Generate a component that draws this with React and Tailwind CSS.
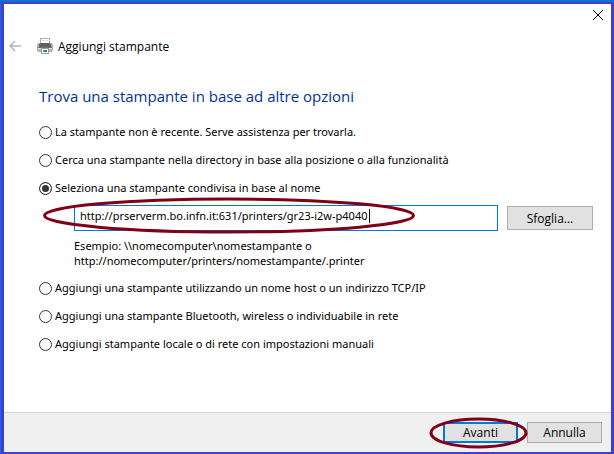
function PrinterIcon() {
  return (
    <svg width="16" height="16" viewBox="0 0 16 16" shapeRendering="crispEdges" aria-hidden="true">
      <path d="M3.5 0.5h9v5h-9z" fill="#fff" stroke="#b0b0b0" />
      <path d="M5 2h6v1H5z" fill="#e0e0e0" />
      <path d="M1 5h14v1h1v7h-1v1H1v-1H0V6h1z" fill="#b4b4b4" />
      <path d="M3 5h10v1h1v3H2V6h1z" fill="#606060" />
      <path d="M1 9h14v1H1z" fill="#707070" />
      <path d="M1 10h14v1H1z" fill="#e8e8e8" />
      <path d="M4.5 10.5h7v5h-7z" fill="#fff" stroke="#9a9a9a" />
      <path d="M6 12h2v2H6z" fill="#2aa198" />
      <path d="M8 12h2v2H8z" fill="#2f5fd0" />
    </svg>
  );
}

function Option({ id, label, defaultChecked }) {
  return (
    <div className="flex h-7 items-center gap-[3px]">
      <input
        type="radio"
        id={id}
        name="method"
        defaultChecked={defaultChecked}
        className="size-[13px] shrink-0 appearance-none rounded-full border border-[#333] bg-white checked:bg-[#333] checked:shadow-[inset_0_0_0_2px_#fff]"
      />
      <label htmlFor={id} className="pb-0.5">{label}</label>
    </div>
  );
}

export default function App() {
  return (
    <div className="flex min-h-screen flex-col border-t-2 border-l border-[#1470cc] font-['Open_Sans','Noto_Sans',sans-serif] text-[12px] leading-[15px] text-black">
      <div className="flex flex-1 flex-col border-t-2 border-r-[3px] border-b-2 border-l-[3px] border-[#423cd6] bg-white">
        <header>
          <div className="flex h-8 items-start justify-end pt-[5px] pr-[7px]">
            <button type="button" aria-label="Chiudi" className="p-px">
              <svg width="10" height="10" viewBox="0 0 10 10" stroke="#000" fill="none" aria-hidden="true">
                <path d="M0 0l10 10M10 0L0 10" />
              </svg>
            </button>
          </div>
          <div className="flex h-5 items-center pl-[5px]">
            <button type="button" aria-label="Indietro" disabled>
              <svg width="12" height="12" viewBox="0 0 12 12" stroke="#b4b4b4" fill="none" aria-hidden="true">
                <path d="M12 6H1M6 1L1 6l5 5" strokeWidth="1.5" />
              </svg>
            </button>
            <div className="ml-4 flex items-center gap-[5px]">
              <PrinterIcon />
              <span>Aggiungi stampante</span>
            </div>
          </div>
        </header>

        <main className="flex-1 pt-7 pr-[18px] pl-[35px]">
          <h1 className="text-[15px] leading-6 text-[#003399]">Trova una stampante in base ad altre opzioni</h1>

          <fieldset className="pt-[10px] font-['Noto_Sans','Open_Sans',sans-serif] text-[11px]">
            <Option id="recent" label="La stampante non è recente. Serve assistenza per trovarla." />
            <Option id="directory" label="Cerca una stampante nella directory in base alla posizione o alla funzionalità" />
            <Option id="shared" label="Seleziona una stampante condivisa in base al nome" defaultChecked />

            <div className="mt-[3px] flex items-center gap-[9px] pl-[35px]">
              <div className="relative flex-1">
                <input
                  type="text"
                  aria-label="Nome stampante"
                  defaultValue="http://prserverm.bo.infn.it:631/printers/gr23-i2w-p4040"
                  className="block h-[26px] w-full border border-[#0078d7] bg-white px-[5px] pb-[5px] outline-none"
                />
                <span className="absolute top-[4px] left-[295px] h-[14px] w-px bg-black" />
                <svg
                  className="pointer-events-none absolute -top-[8px] -left-8"
                  width="374"
                  height="37"
                  viewBox="0 0 374 37"
                  fill="none"
                  aria-hidden="true"
                >
                  <ellipse cx="187" cy="18.5" rx="184.500" ry="16.500" stroke="#80001a" strokeWidth="3" />
                </svg>
              </div>
              <button
                type="button"
                className="h-6 w-[86px] border border-[#adadad] bg-[#e1e1e1] font-['Open_Sans','Noto_Sans',sans-serif] text-[12px]"
              >
                Sfoglia...
              </button>
            </div>

            <p className="mt-[7px] mb-1.5 pl-[35px]">
              Esempio: \\nomecomputer\nomestampante o
              <br />
              http://nomecomputer/printers/nomestampante/.printer
            </p>

            <Option id="tcpip" label="Aggiungi una stampante utilizzando un nome host o un indirizzo TCP/IP" />
            <Option id="wireless" label="Aggiungi una stampante Bluetooth, wireless o individuabile in rete" />
            <Option id="manual" label="Aggiungi stampante locale o di rete con impostazioni manuali" />
          </fieldset>
        </main>

        <footer className="flex h-10 items-center justify-end gap-[9px] border-t border-[#d2d6d2] bg-[#f0f0f0] pr-[9px]">
          <div className="relative">
            <button type="button" className="block h-[21px] w-[75px] border-2 border-[#0078d7] bg-[#e1e1e1]">
              <span className="block leading-[17px]">Avanti</span>
            </button>
            <svg
              className="pointer-events-none absolute -top-[5px] -left-[14px]"
              width="100"
              height="32"
              viewBox="0 0 100 32"
              fill="none"
              aria-hidden="true"
            >
              <ellipse cx="49.5" cy="16" rx="47.5" ry="14" stroke="#80001a" strokeWidth="3" />
            </svg>
          </div>
          <button type="button" className="h-[21px] w-[75px] border border-[#adadad] bg-[#e1e1e1]">
            Annulla
          </button>
        </footer>
      </div>
    </div>
  );
}
